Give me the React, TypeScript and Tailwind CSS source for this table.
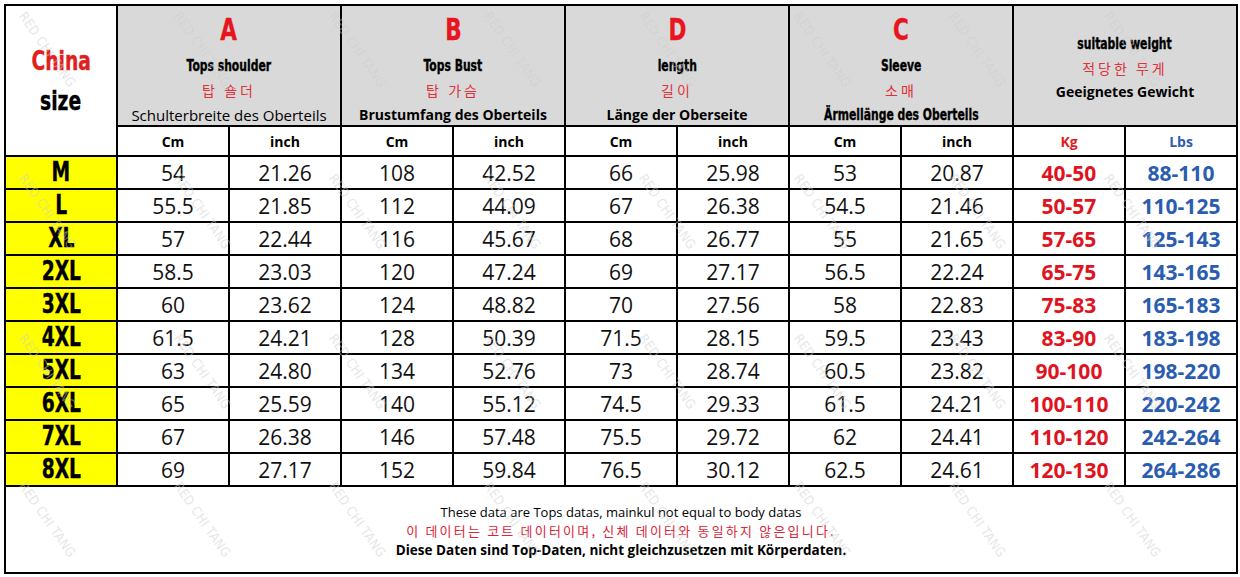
import React from "react";

const narrow = "font-['DejaVu_Sans',sans-serif] font-bold inline-block scale-x-[0.72] [-webkit-text-stroke:0.4px_currentColor]";
const body = "font-['Open_Sans',Lato,sans-serif]";
const kr = "font-['Noto_Sans_CJK_KR',sans-serif]";

const groups = [
  { letter: "A", title: "Tops shoulder", ko: "탑 숄더", de: "Schulterbreite des Oberteils", deStyle: "regular" },
  { letter: "B", title: "Tops Bust", ko: "탑 가슴", de: "Brustumfang des Oberteils", deStyle: "bold" },
  { letter: "D", title: "length", ko: "길이", de: "Länge der Oberseite", deStyle: "bold" },
  { letter: "C", title: "Sleeve", ko: "소매", de: "Ärmellänge des Oberteils", deStyle: "narrow" },
];

const rows = [
  ["M", "54", "21.26", "108", "42.52", "66", "25.98", "53", "20.87", "40-50", "88-110"],
  ["L", "55.5", "21.85", "112", "44.09", "67", "26.38", "54.5", "21.46", "50-57", "110-125"],
  ["XL", "57", "22.44", "116", "45.67", "68", "26.77", "55", "21.65", "57-65", "125-143"],
  ["2XL", "58.5", "23.03", "120", "47.24", "69", "27.17", "56.5", "22.24", "65-75", "143-165"],
  ["3XL", "60", "23.62", "124", "48.82", "70", "27.56", "58", "22.83", "75-83", "165-183"],
  ["4XL", "61.5", "24.21", "128", "50.39", "71.5", "28.15", "59.5", "23.43", "83-90", "183-198"],
  ["5XL", "63", "24.80", "134", "52.76", "73", "28.74", "60.5", "23.82", "90-100", "198-220"],
  ["6XL", "65", "25.59", "140", "55.12", "74.5", "29.33", "61.5", "24.21", "100-110", "220-242"],
  ["7XL", "67", "26.38", "146", "57.48", "75.5", "29.72", "62", "24.41", "110-120", "242-264"],
  ["8XL", "69", "27.17", "152", "59.84", "76.5", "30.12", "62.5", "24.61", "120-130", "264-286"],
];

function Watermarks() {
  const marks = [];
  const tops = [8, 170, 330, 478];
  for (let j = 0; j < tops.length; j++) {
    for (let i = 0; i < 8; i++) {
      marks.push(
        <span
          key={`${i}-${j}`}
          className="absolute origin-top-left rotate-[55deg] whitespace-nowrap font-['DejaVu_Sans_Condensed','DejaVu_Sans',sans-serif] text-[13px] tracking-wide text-[#cfcfcf] opacity-50"
          style={{ left: 30 + i * 155, top: tops[j] }}
        >
          RED CHI TANG
        </span>
      );
    }
  }
  return <div className="pointer-events-none absolute inset-0 overflow-hidden">{marks}</div>;
}

export default function App() {
  return (
    <div className="relative h-[577px] w-[1240px] bg-white">
      <div className="pl-[4px] pt-[4px]">
        <div className="grid grid-cols-[repeat(11,110px)] grid-rows-[119px_28px_repeat(10,31px)_85px] gap-[2px] bg-black p-[2px] w-[1234px]">
          {/* China size */}
          <div className="row-span-2 flex flex-col items-center justify-center bg-white">
            <span className={`${narrow} text-[26px] leading-[40px] text-[#e0201c] scale-x-[0.66]`}>China</span>
            <span className={`${narrow} text-[26px] leading-[40px] text-black scale-x-[0.66]`}>size</span>
          </div>

          {groups.map((g) => (
            <div key={g.letter} className="col-span-2 flex flex-col items-center bg-[#d9d9d9] pt-[4px]">
              <span className={`${narrow} text-[30px] leading-[40px] text-[#e8141e]`}>{g.letter}</span>
              <span className={`${narrow} mt-[6px] text-[15px] leading-[20px] text-black`}>{g.title}</span>
              <span className={`${kr} mt-[4px] text-[14px] leading-[20px] tracking-[3px] text-[#e0303a]`}>{g.ko}</span>
              <span
                className={`mt-[5px] leading-[20px] text-black ${
                  g.deStyle === "regular"
                    ? `${body} text-[15px]`
                    : g.deStyle === "bold"
                    ? `${body} text-[14px] font-bold`
                    : `${narrow} text-[15px]`
                }`}
              >
                {g.de}
              </span>
            </div>
          ))}

          <div className="col-span-2 flex flex-col items-center justify-center bg-[#d9d9d9] pt-[4px]">
            <span className={`${narrow} text-[15px] leading-[24px] text-black`}>suitable weight</span>
            <span className={`${kr} text-[14px] leading-[24px] tracking-[3px] text-[#e0303a]`}>적당한 무게</span>
            <span className={`${body} text-[14px] font-bold leading-[24px] text-black`}>Geeignetes Gewicht</span>
          </div>

          {/* unit row */}
          {["Cm", "inch", "Cm", "inch", "Cm", "inch", "Cm", "inch"].map((u, i) => (
            <div key={i} className={`flex items-center justify-center bg-white ${body} text-[14px] font-bold text-black`}>
              {u}
            </div>
          ))}
          <div className={`flex items-center justify-center bg-white ${body} text-[14px] font-bold text-[#e0201c]`}>Kg</div>
          <div className={`flex items-center justify-center bg-white ${body} text-[14px] font-bold text-[#2f5caf]`}>Lbs</div>

          {/* data rows */}
          {rows.map((r) =>
            r.map((v, i) => {
              if (i === 0)
                return (
                  <div key={r[0] + i} className="flex items-center justify-center bg-[#ffff00]">
                    <span className={`${narrow} text-[26px] leading-[31px] text-black scale-x-[0.68]`}>{v}</span>
                  </div>
                );
              const color = i === 9 ? "text-[#e0141e] font-bold" : i === 10 ? "text-[#2a5db0] font-bold" : "text-[#111]";
              return (
                <div key={r[0] + i} className={`flex items-center justify-center bg-white pt-[2px] ${body} text-[21px] ${color}`}>
                  {v}
                </div>
              );
            })
          )}

          {/* footer */}
          <div className="col-span-11 flex flex-col items-center justify-center bg-white pt-[4px]">
            <span className={`${body} text-[13px] leading-[18px] text-black`}>
              These data are Tops datas, mainkul not equal to body datas
            </span>
            <span className={`${kr} text-[13px] leading-[19px] tracking-[2.2px] text-[#d9263a]`}>
              이 데이터는 코트 데이터이며, 신체 데이터와 동일하지 않은입니다.
            </span>
            <span className={`${body} text-[13.5px] font-bold leading-[20px] text-black`}>
              Diese Daten sind Top-Daten, nicht gleichzusetzen mit Körperdaten.
            </span>
          </div>
        </div>
      </div>
      <Watermarks />
    </div>
  );
}
